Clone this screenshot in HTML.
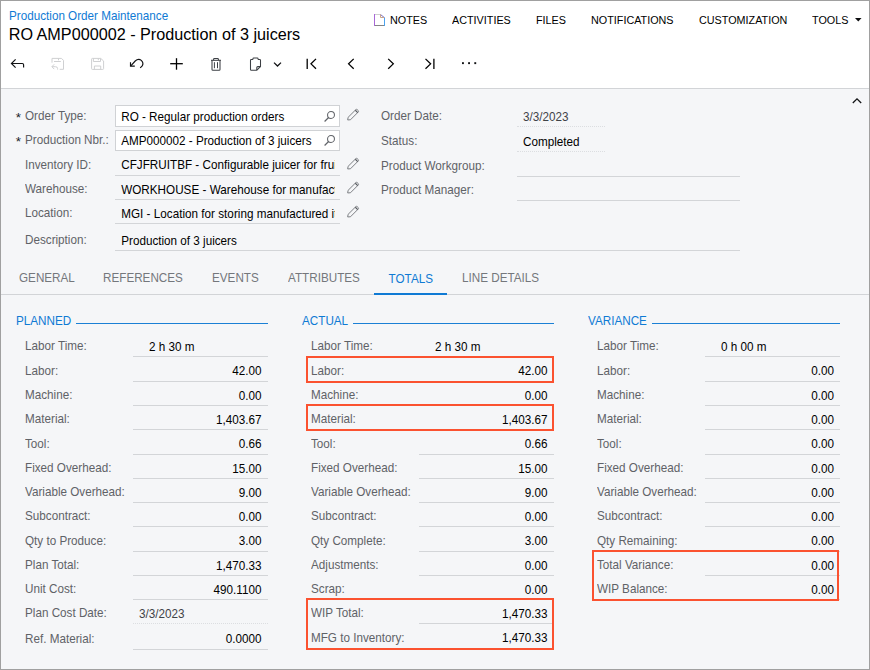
<!DOCTYPE html>
<html lang="en"><head><meta charset="utf-8"><title>Production Order Maintenance</title>
<style>
html,body{margin:0;padding:0;}
body{width:870px;height:670px;overflow:hidden;background:#f5f6f8;font-family:"Liberation Sans",sans-serif;position:relative;}
#frame{position:absolute;left:0;top:0;width:868px;height:668px;border:1px solid #a0a0a0;pointer-events:none;z-index:10;}
#hdr{position:absolute;left:0;top:0;width:870px;height:88px;background:#fff;}
#hdrline{position:absolute;left:0;top:88px;width:870px;height:1px;background:#d2d4d7;}
.t{position:absolute;height:20px;line-height:20px;white-space:nowrap;font-size:11.7px;color:#5f6267;transform:scaleY(1.08);transform-origin:0 14px;}
.ns{transform:none;}
.r{text-align:right;}
.v{color:#000;}
.ln{position:absolute;height:1px;background:#d3d5d8;}
.dot{position:absolute;height:0;border-top:1px dotted #dcdee1;}
.sec{color:#0f7ad4;font-size:11.7px;}
.secln{position:absolute;height:1px;background:#1b80d5;}
.box{position:absolute;border:2px solid #fb5230;box-sizing:border-box;}
.inp{position:absolute;background:#fff;border:1px solid #d0d2d5;box-sizing:border-box;}
.menu{font-size:10.8px;color:#000;}
.tab{font-size:11.7px;color:#74777c;}
.tab.act{color:#0f7ad4;}
svg{position:absolute;overflow:visible;}
</style></head><body>
<div id="hdr"></div><div id="hdrline"></div>

<div class="t " style="left:9px;top:5.50px;color:#0f7ad4;font-size:11.7px;">Production Order Maintenance</div>
<div class="t ns" style="left:8.7px;top:24.30px;color:#000;font-size:16.2px;transform:scaleY(1.035);transform-origin:0 15.6px;">RO AMP000002 - Production of 3 juicers</div>
<div class="t menu" style="left:390px;top:9.50px;">NOTES</div>
<div class="t menu" style="left:452px;top:9.50px;">ACTIVITIES</div>
<div class="t menu" style="left:536px;top:9.50px;">FILES</div>
<div class="t menu" style="left:591px;top:9.50px;">NOTIFICATIONS</div>
<div class="t menu" style="left:699px;top:9.50px;">CUSTOMIZATION</div>
<div class="t menu" style="left:812px;top:9.50px;">TOOLS</div>
<svg style="left:374px;top:14px" width="11" height="12" viewBox="0 0 11 12" fill="none" stroke-width="1"><path d="M0.5 0V12" stroke="#a867d8"/><path d="M1 0.5H6.5" stroke="#cfcfcf"/><path d="M1 11.5H10" stroke="#858585"/><path d="M10.5 3.5V12" stroke="#4aa3f0"/><path d="M6.5 0.5L10.5 3.7" stroke="#7a6fc0"/><path d="M6.5 0.5V3.5H10" stroke="#c9a58a"/></svg>
<svg style="left:855.2px;top:17.6px" width="6.6" height="3.6" viewBox="0 0 6.6 3.6"><path d="M0 0H6.6L3.3 3.6Z" fill="#0c0d0f"/></svg>
<svg style="left:0;top:0" width="870" height="90" viewBox="0 0 870 90" fill="none" stroke-linecap="butt" stroke-linejoin="miter">
<g stroke="#111214" stroke-width="1.15"><path d="M15.6 59.3L11.4 63.5L15.6 67.7"/><path d="M11.6 63.5H22.3Q23.6 63.5 23.6 64.8V67.4"/></g>
<g stroke="#cfd0d2" stroke-width="1"><path d="M52 62.7V58.4H61.5L63.5 60.4V69.3H59.7"/><path d="M54 61.5H60.8"/><path d="M58.5 58.4V60.3"/><path d="M54.2 64.3L51.9 66.7L54.2 69.1"/><path d="M52 66.7H55.5Q57.6 66.7 57.6 68.6V69.6"/></g>
<g stroke="#cfd0d2" stroke-width="1"><path d="M92.4 58.4H100.7L103.6 61V68.6Q103.6 69.4 102.8 69.4H92.4Q91.6 69.4 91.6 68.6V59.2Q91.6 58.4 92.4 58.4Z"/><path d="M93.4 58.4V61.5H100.5V58.4"/><path d="M98.3 58.4V60.2"/><path d="M94.4 69.4V66H100.7V69.4"/></g>
<g stroke="#111214" stroke-width="1.15"><path d="M130.5 62.2V66.1H134.8"/><path d="M130.8 65.8L135.2 61Q138.4 58.2 141.3 60.4Q144 63 142.2 66L140.2 67.9"/></g>
<g stroke="#000" stroke-width="1.3"><path d="M176.5 58.2V69.7"/><path d="M170.2 63.7H182.8"/></g>
<g stroke="#3d4045" stroke-width="1.05"><path d="M211 60.3H221"/><path d="M213.6 60.3V59.2Q213.6 58.4 214.4 58.4H217.6Q218.4 58.4 218.4 59.2V60.3"/><path d="M212 60.3V69.4Q212 70.3 212.9 70.3H219.1Q220 70.3 220 69.4V60.3"/><path d="M214.4 62.2V68.2" stroke-width="1"/><path d="M217.5 62.2V68.2" stroke-width="1"/></g>
<g stroke="#3d4045" stroke-width="1.05"><path d="M253 59.4H251.3Q250.5 59.4 250.5 60.2V69.4Q250.5 70.2 251.3 70.2H256.8L260.5 66.5V60.2Q260.5 59.4 259.7 59.4H258"/><path d="M253 59.6V58.6Q253 57.9 253.7 57.9H257.3Q258 57.9 258 58.6V59.6"/><path d="M256.8 70V67.6Q256.8 66.6 257.8 66.6H260.3"/></g>
<g stroke="#111214" stroke-width="1.3"><path d="M274 62.6L277.5 66L281 62.6"/></g>
<g stroke="#000" stroke-width="1.3"><path d="M307.2 58.7V69"/><path d="M316 58.9L311 63.85L316 68.8"/><path d="M353.7 58.9L348.6 63.85L353.7 68.8"/><path d="M388.2 58.9L393.3 63.85L388.2 68.8"/><path d="M425.5 58.9L430.6 63.85L425.5 68.8"/><path d="M433.9 58.7V69"/></g>
<g fill="#111214" stroke="none"><rect x="462" y="62.2" width="1.9" height="1.9"/><rect x="468.1" y="62.2" width="1.9" height="1.9"/><rect x="474.3" y="62.2" width="1.9" height="1.9"/></g>
</svg>
<svg style="left:851.5px;top:96.9px" width="10" height="8" viewBox="0 0 10 8" fill="none" stroke="#111214" stroke-width="1.3"><path d="M0.8 6L5 1.9L9.2 6"/></svg>
<div class="t ns" style="left:15.8px;top:108.30px;font-size:13.5px;color:#202226;">*</div>
<div class="t " style="left:25px;top:106px;">Order Type:</div>
<div class="inp" style="left:115px;top:105px;width:225px;height:22px;"></div>
<svg style="left:322.9px;top:109.9px" width="14" height="14" viewBox="0 0 14 14" fill="none" stroke="#606368" stroke-width="1.05"><circle cx="8" cy="5" r="3.45"/><path d="M5.6 7.5L1.6 11.5" stroke-width="1.2"/></svg>
<div class="t v" style="left:121.2px;top:107px;width:213.8px;overflow:hidden;letter-spacing:0px;">RO - Regular production orders</div>
<svg style="left:346px;top:106.7px" width="13.6" height="13.6" viewBox="0 0 13 13" fill="none" stroke="#74777c" stroke-width="0.9"><path d="M1.6 12.4L2 9.9L9.3 2.6Q10.1 1.8 10.9 2.6L11.6 3.3Q12.4 4.1 11.6 4.9L4.3 12.2Z"/><path d="M8.9 3.1L11.2 5.4" stroke="#55585d" stroke-width="1.1"/></svg>
<div class="t ns" style="left:15.8px;top:132.30px;font-size:13.5px;color:#202226;">*</div>
<div class="t " style="left:25px;top:130px;">Production Nbr.:</div>
<div class="inp" style="left:115px;top:130px;width:225px;height:21px;"></div>
<svg style="left:322.9px;top:134.4px" width="14" height="14" viewBox="0 0 14 14" fill="none" stroke="#606368" stroke-width="1.05"><circle cx="8" cy="5" r="3.45"/><path d="M5.6 7.5L1.6 11.5" stroke-width="1.2"/></svg>
<div class="t v" style="left:121.2px;top:131px;width:213.8px;overflow:hidden;letter-spacing:0px;">AMP000002 - Production of 3 juicers</div>
<div class="t " style="left:25px;top:155px;">Inventory ID:</div>
<div class="ln" style="left:115px;top:175px;width:225px;"></div>
<div class="t v" style="left:121.2px;top:155px;width:213.8px;overflow:hidden;letter-spacing:0.015px;">CFJFRUITBF - Configurable juicer for fruit</div>
<svg style="left:346px;top:155.70000000000002px" width="13.6" height="13.6" viewBox="0 0 13 13" fill="none" stroke="#74777c" stroke-width="0.9"><path d="M1.6 12.4L2 9.9L9.3 2.6Q10.1 1.8 10.9 2.6L11.6 3.3Q12.4 4.1 11.6 4.9L4.3 12.2Z"/><path d="M8.9 3.1L11.2 5.4" stroke="#55585d" stroke-width="1.1"/></svg>
<div class="t " style="left:25px;top:179px;">Warehouse:</div>
<div class="ln" style="left:115px;top:199px;width:225px;"></div>
<div class="t v" style="left:121.2px;top:180px;width:213.8px;overflow:hidden;letter-spacing:0.015px;">WORKHOUSE - Warehouse for manufactured</div>
<svg style="left:346px;top:179.70000000000002px" width="13.6" height="13.6" viewBox="0 0 13 13" fill="none" stroke="#74777c" stroke-width="0.9"><path d="M1.6 12.4L2 9.9L9.3 2.6Q10.1 1.8 10.9 2.6L11.6 3.3Q12.4 4.1 11.6 4.9L4.3 12.2Z"/><path d="M8.9 3.1L11.2 5.4" stroke="#55585d" stroke-width="1.1"/></svg>
<div class="t " style="left:25px;top:203px;">Location:</div>
<div class="ln" style="left:115px;top:223px;width:225px;"></div>
<div class="t v" style="left:121.2px;top:204px;width:213.8px;overflow:hidden;letter-spacing:0.015px;">MGI - Location for storing manufactured items</div>
<svg style="left:346px;top:203.70000000000002px" width="13.6" height="13.6" viewBox="0 0 13 13" fill="none" stroke="#74777c" stroke-width="0.9"><path d="M1.6 12.4L2 9.9L9.3 2.6Q10.1 1.8 10.9 2.6L11.6 3.3Q12.4 4.1 11.6 4.9L4.3 12.2Z"/><path d="M8.9 3.1L11.2 5.4" stroke="#55585d" stroke-width="1.1"/></svg>
<div class="t " style="left:25px;top:230px;">Description:</div>
<div class="t v" style="left:121.2px;top:231px;">Production of 3 juicers</div>
<div class="ln" style="left:115px;top:250px;width:625px;"></div>
<div class="t " style="left:381px;top:106px;">Order Date:</div>
<div class="t " style="left:523px;top:107px;color:#3f4247;">3/3/2023</div>
<div class="dot" style="left:517px;top:126px;width:88px;"></div>
<div class="t " style="left:381px;top:131px;">Status:</div>
<div class="t v" style="left:523px;top:132px;">Completed</div>
<div class="dot" style="left:517px;top:151px;width:88px;"></div>
<div class="t " style="left:381px;top:156px;">Product Workgroup:</div>
<div class="ln" style="left:517px;top:176px;width:223px;"></div>
<div class="t " style="left:381px;top:180px;">Product Manager:</div>
<div class="ln" style="left:517px;top:200px;width:223px;"></div>
<div class="t tab" style="left:19px;top:268.00px;">GENERAL</div>
<div class="t tab" style="left:103px;top:268.00px;">REFERENCES</div>
<div class="t tab" style="left:212px;top:268.00px;">EVENTS</div>
<div class="t tab" style="left:288px;top:268.00px;">ATTRIBUTES</div>
<div class="t tab act" style="left:388.6px;top:269.00px;">TOTALS</div>
<div class="t tab" style="left:462px;top:268.00px;">LINE DETAILS</div>
<div class="ln" style="left:0px;top:294px;width:870px;background:#d2d4d7;"></div>
<div style="position:absolute;left:374px;top:293px;width:73px;height:2px;background:#0f7ad4;"></div>
<div class="t sec" style="left:16px;top:311px;">PLANNED</div>
<div class="secln" style="left:76px;top:323px;width:192px;"></div>
<div class="t " style="left:25px;top:336px;">Labor Time:</div>
<div class="t v" style="left:149px;top:337px;">2 h 30 m</div>
<div class="ln" style="left:133px;top:356px;width:135px;"></div>
<div class="t " style="left:25px;top:361px;">Labor:</div>
<div class="t r v" style="left:61.5px;width:200px;top:361px;">42.00</div>
<div class="ln" style="left:133px;top:381px;width:135px;"></div>
<div class="t " style="left:25px;top:385px;">Machine:</div>
<div class="t r v" style="left:61.5px;width:200px;top:386px;">0.00</div>
<div class="ln" style="left:133px;top:405px;width:135px;"></div>
<div class="t " style="left:25px;top:409px;">Material:</div>
<div class="t r v" style="left:61.5px;width:200px;top:410px;">1,403.67</div>
<div class="ln" style="left:133px;top:429px;width:135px;"></div>
<div class="t " style="left:25px;top:434px;">Tool:</div>
<div class="t r v" style="left:61.5px;width:200px;top:434px;">0.66</div>
<div class="ln" style="left:133px;top:454px;width:135px;"></div>
<div class="t " style="left:25px;top:458px;">Fixed Overhead:</div>
<div class="t r v" style="left:61.5px;width:200px;top:459px;">15.00</div>
<div class="ln" style="left:133px;top:478px;width:135px;"></div>
<div class="t " style="left:25px;top:482px;">Variable Overhead:</div>
<div class="t r v" style="left:61.5px;width:200px;top:483px;">9.00</div>
<div class="ln" style="left:133px;top:502px;width:135px;"></div>
<div class="t " style="left:25px;top:506px;">Subcontract:</div>
<div class="t r v" style="left:61.5px;width:200px;top:507px;">0.00</div>
<div class="ln" style="left:133px;top:526px;width:135px;"></div>
<div class="t " style="left:25px;top:531px;">Qty to Produce:</div>
<div class="t r v" style="left:61.5px;width:200px;top:531px;">3.00</div>
<div class="ln" style="left:133px;top:551px;width:135px;"></div>
<div class="t " style="left:25px;top:555px;">Plan Total:</div>
<div class="t r v" style="left:61.5px;width:200px;top:556px;">1,470.33</div>
<div class="ln" style="left:133px;top:575px;width:135px;"></div>
<div class="t " style="left:25px;top:579px;">Unit Cost:</div>
<div class="t r v" style="left:61.5px;width:200px;top:580px;">490.1100</div>
<div class="ln" style="left:133px;top:599px;width:135px;"></div>
<div class="t " style="left:25px;top:603px;">Plan Cost Date:</div>
<div class="t " style="left:139px;top:604px;color:#3f4247;">3/3/2023</div>
<div class="dot" style="left:133px;top:623px;width:135px;"></div>
<div class="t " style="left:25px;top:629px;">Ref. Material:</div>
<div class="t r v" style="left:61.5px;width:200px;top:629px;">0.0000</div>
<div class="ln" style="left:133px;top:649px;width:135px;"></div>
<div class="t sec" style="left:302px;top:311px;">ACTUAL</div>
<div class="secln" style="left:353px;top:323px;width:201px;"></div>
<div class="t " style="left:311px;top:336px;">Labor Time:</div>
<div class="t v" style="left:435px;top:337px;">2 h 30 m</div>
<div class="ln" style="left:419px;top:356px;width:135px;"></div>
<div class="t " style="left:311px;top:361px;">Labor:</div>
<div class="t r v" style="left:347.5px;width:200px;top:361px;">42.00</div>
<div class="ln" style="left:419px;top:381px;width:135px;"></div>
<div class="t " style="left:311px;top:385px;">Machine:</div>
<div class="t r v" style="left:347.5px;width:200px;top:386px;">0.00</div>
<div class="ln" style="left:419px;top:405px;width:135px;"></div>
<div class="t " style="left:311px;top:409px;">Material:</div>
<div class="t r v" style="left:347.5px;width:200px;top:410px;">1,403.67</div>
<div class="ln" style="left:419px;top:429px;width:135px;"></div>
<div class="t " style="left:311px;top:434px;">Tool:</div>
<div class="t r v" style="left:347.5px;width:200px;top:434px;">0.66</div>
<div class="ln" style="left:419px;top:454px;width:135px;"></div>
<div class="t " style="left:311px;top:458px;">Fixed Overhead:</div>
<div class="t r v" style="left:347.5px;width:200px;top:459px;">15.00</div>
<div class="ln" style="left:419px;top:478px;width:135px;"></div>
<div class="t " style="left:311px;top:482px;">Variable Overhead:</div>
<div class="t r v" style="left:347.5px;width:200px;top:483px;">9.00</div>
<div class="ln" style="left:419px;top:502px;width:135px;"></div>
<div class="t " style="left:311px;top:506px;">Subcontract:</div>
<div class="t r v" style="left:347.5px;width:200px;top:507px;">0.00</div>
<div class="ln" style="left:419px;top:526px;width:135px;"></div>
<div class="t " style="left:311px;top:531px;">Qty Complete:</div>
<div class="t r v" style="left:347.5px;width:200px;top:531px;">3.00</div>
<div class="ln" style="left:419px;top:551px;width:135px;"></div>
<div class="t " style="left:311px;top:555px;">Adjustments:</div>
<div class="t r v" style="left:347.5px;width:200px;top:556px;">0.00</div>
<div class="ln" style="left:419px;top:575px;width:135px;"></div>
<div class="t " style="left:311px;top:579px;">Scrap:</div>
<div class="t r v" style="left:347.5px;width:200px;top:580px;">0.00</div>
<div class="ln" style="left:419px;top:599px;width:135px;"></div>
<div class="t " style="left:311px;top:603px;">WIP Total:</div>
<div class="t r v" style="left:347.5px;width:200px;top:604px;">1,470.33</div>
<div class="ln" style="left:419px;top:623px;width:135px;"></div>
<div class="t " style="left:311px;top:628px;">MFG to Inventory:</div>
<div class="t r v" style="left:347.5px;width:200px;top:628px;">1,470.33</div>
<div class="ln" style="left:419px;top:649px;width:135px;"></div>
<div class="t sec" style="left:588px;top:311px;">VARIANCE</div>
<div class="secln" style="left:652px;top:323px;width:188px;"></div>
<div class="t " style="left:597px;top:336px;">Labor Time:</div>
<div class="t v" style="left:721px;top:337px;">0 h 00 m</div>
<div class="ln" style="left:705px;top:356px;width:135px;"></div>
<div class="t " style="left:597px;top:361px;">Labor:</div>
<div class="t r v" style="left:634.1px;width:200px;top:361px;">0.00</div>
<div class="ln" style="left:705px;top:381px;width:135px;"></div>
<div class="t " style="left:597px;top:385px;">Machine:</div>
<div class="t r v" style="left:634.1px;width:200px;top:386px;">0.00</div>
<div class="ln" style="left:705px;top:405px;width:135px;"></div>
<div class="t " style="left:597px;top:409px;">Material:</div>
<div class="t r v" style="left:634.1px;width:200px;top:410px;">0.00</div>
<div class="ln" style="left:705px;top:429px;width:135px;"></div>
<div class="t " style="left:597px;top:434px;">Tool:</div>
<div class="t r v" style="left:634.1px;width:200px;top:434px;">0.00</div>
<div class="ln" style="left:705px;top:454px;width:135px;"></div>
<div class="t " style="left:597px;top:458px;">Fixed Overhead:</div>
<div class="t r v" style="left:634.1px;width:200px;top:459px;">0.00</div>
<div class="ln" style="left:705px;top:478px;width:135px;"></div>
<div class="t " style="left:597px;top:482px;">Variable Overhead:</div>
<div class="t r v" style="left:634.1px;width:200px;top:483px;">0.00</div>
<div class="ln" style="left:705px;top:502px;width:135px;"></div>
<div class="t " style="left:597px;top:506px;">Subcontract:</div>
<div class="t r v" style="left:634.1px;width:200px;top:507px;">0.00</div>
<div class="ln" style="left:705px;top:526px;width:135px;"></div>
<div class="t " style="left:597px;top:531px;">Qty Remaining:</div>
<div class="t r v" style="left:634.1px;width:200px;top:531px;">0.00</div>
<div class="ln" style="left:705px;top:551px;width:135px;"></div>
<div class="t " style="left:597px;top:555px;">Total Variance:</div>
<div class="t r v" style="left:634.1px;width:200px;top:556px;">0.00</div>
<div class="ln" style="left:705px;top:575px;width:135px;"></div>
<div class="t " style="left:597px;top:579px;">WIP Balance:</div>
<div class="t r v" style="left:634.1px;width:200px;top:580px;">0.00</div>
<div class="ln" style="left:705px;top:599px;width:135px;"></div>
<div class="box" style="left:306px;top:356px;width:248px;height:27px;"></div>
<div class="box" style="left:306px;top:404px;width:248px;height:27px;"></div>
<div class="box" style="left:306px;top:598px;width:248px;height:52px;"></div>
<div class="box" style="left:592px;top:550px;width:247px;height:51px;"></div>
<div id="frame"></div>
</body></html>
